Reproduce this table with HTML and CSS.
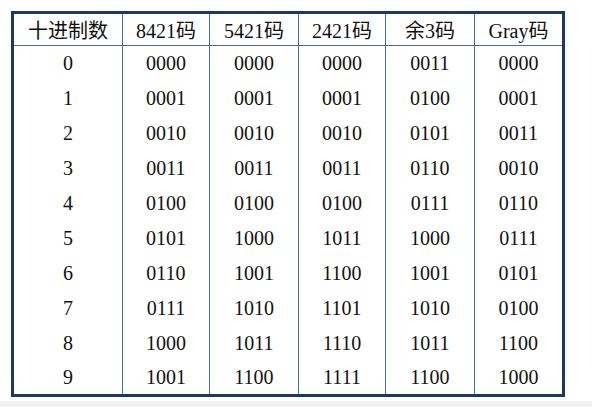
FILE: index.html
```html
<!DOCTYPE html>
<html>
<head>
<meta charset="utf-8">
<link rel="stylesheet" href="styles.css">
</head>
<body>
<div class="page">
  <table class="codes">
    <colgroup>
      <col class="c1"><col class="c2"><col class="c3"><col class="c4"><col class="c5"><col class="c6">
    </colgroup>
    <thead>
      <tr><th>十进制数</th><th>8421码</th><th>5421码</th><th>2421码</th><th>余3码</th><th>Gray码</th></tr>
    </thead>
    <tbody>
      <tr><td>0</td><td>0000</td><td>0000</td><td>0000</td><td>0011</td><td>0000</td></tr>
      <tr><td>1</td><td>0001</td><td>0001</td><td>0001</td><td>0100</td><td>0001</td></tr>
      <tr><td>2</td><td>0010</td><td>0010</td><td>0010</td><td>0101</td><td>0011</td></tr>
      <tr><td>3</td><td>0011</td><td>0011</td><td>0011</td><td>0110</td><td>0010</td></tr>
      <tr><td>4</td><td>0100</td><td>0100</td><td>0100</td><td>0111</td><td>0110</td></tr>
      <tr><td>5</td><td>0101</td><td>1000</td><td>1011</td><td>1000</td><td>0111</td></tr>
      <tr><td>6</td><td>0110</td><td>1001</td><td>1100</td><td>1001</td><td>0101</td></tr>
      <tr><td>7</td><td>0111</td><td>1010</td><td>1101</td><td>1010</td><td>0100</td></tr>
      <tr><td>8</td><td>1000</td><td>1011</td><td>1110</td><td>1011</td><td>1100</td></tr>
      <tr><td>9</td><td>1001</td><td>1100</td><td>1111</td><td>1100</td><td>1000</td></tr>
    </tbody>
  </table>
</div>
<div class="strip"></div>
</body>
</html>
```
FILE: styles.css
```css
html, body {
  margin: 0;
  padding: 0;
  background: #ffffff;
}
body {
  display: flex;
  flex-direction: column;
  height: 407px;
}
.page {
  padding: 11px 0 4px 11px;
}
.strip {
  flex: 1;
  background: #f3f3f3;
}
.codes {
  border-collapse: collapse;
  table-layout: fixed;
  width: 551px;
  border: 3px solid #1f3763;
  font-family: "Liberation Serif", "Noto Sans CJK SC", serif;
  color: #111;
}
.c1 { width: 110px; }
.c2 { width: 87px; }
.c3 { width: 89px; }
.c4 { width: 87px; }
.c5 { width: 89px; }
.c6 { width: 89px; }
.codes tr {
  height: 35px;
}
.codes thead tr {
  height: 33px;
}
.codes th, .codes td {
  border: 1px solid #4d6c99;
  text-align: center;
  vertical-align: middle;
  padding: 0;
  line-height: 20px;
  font-size: 20px;
  font-weight: normal;
}
.codes thead th {
  padding-top: 2px;
}
.codes tbody td {
  border-top: none;
  border-bottom: none;
}
```
